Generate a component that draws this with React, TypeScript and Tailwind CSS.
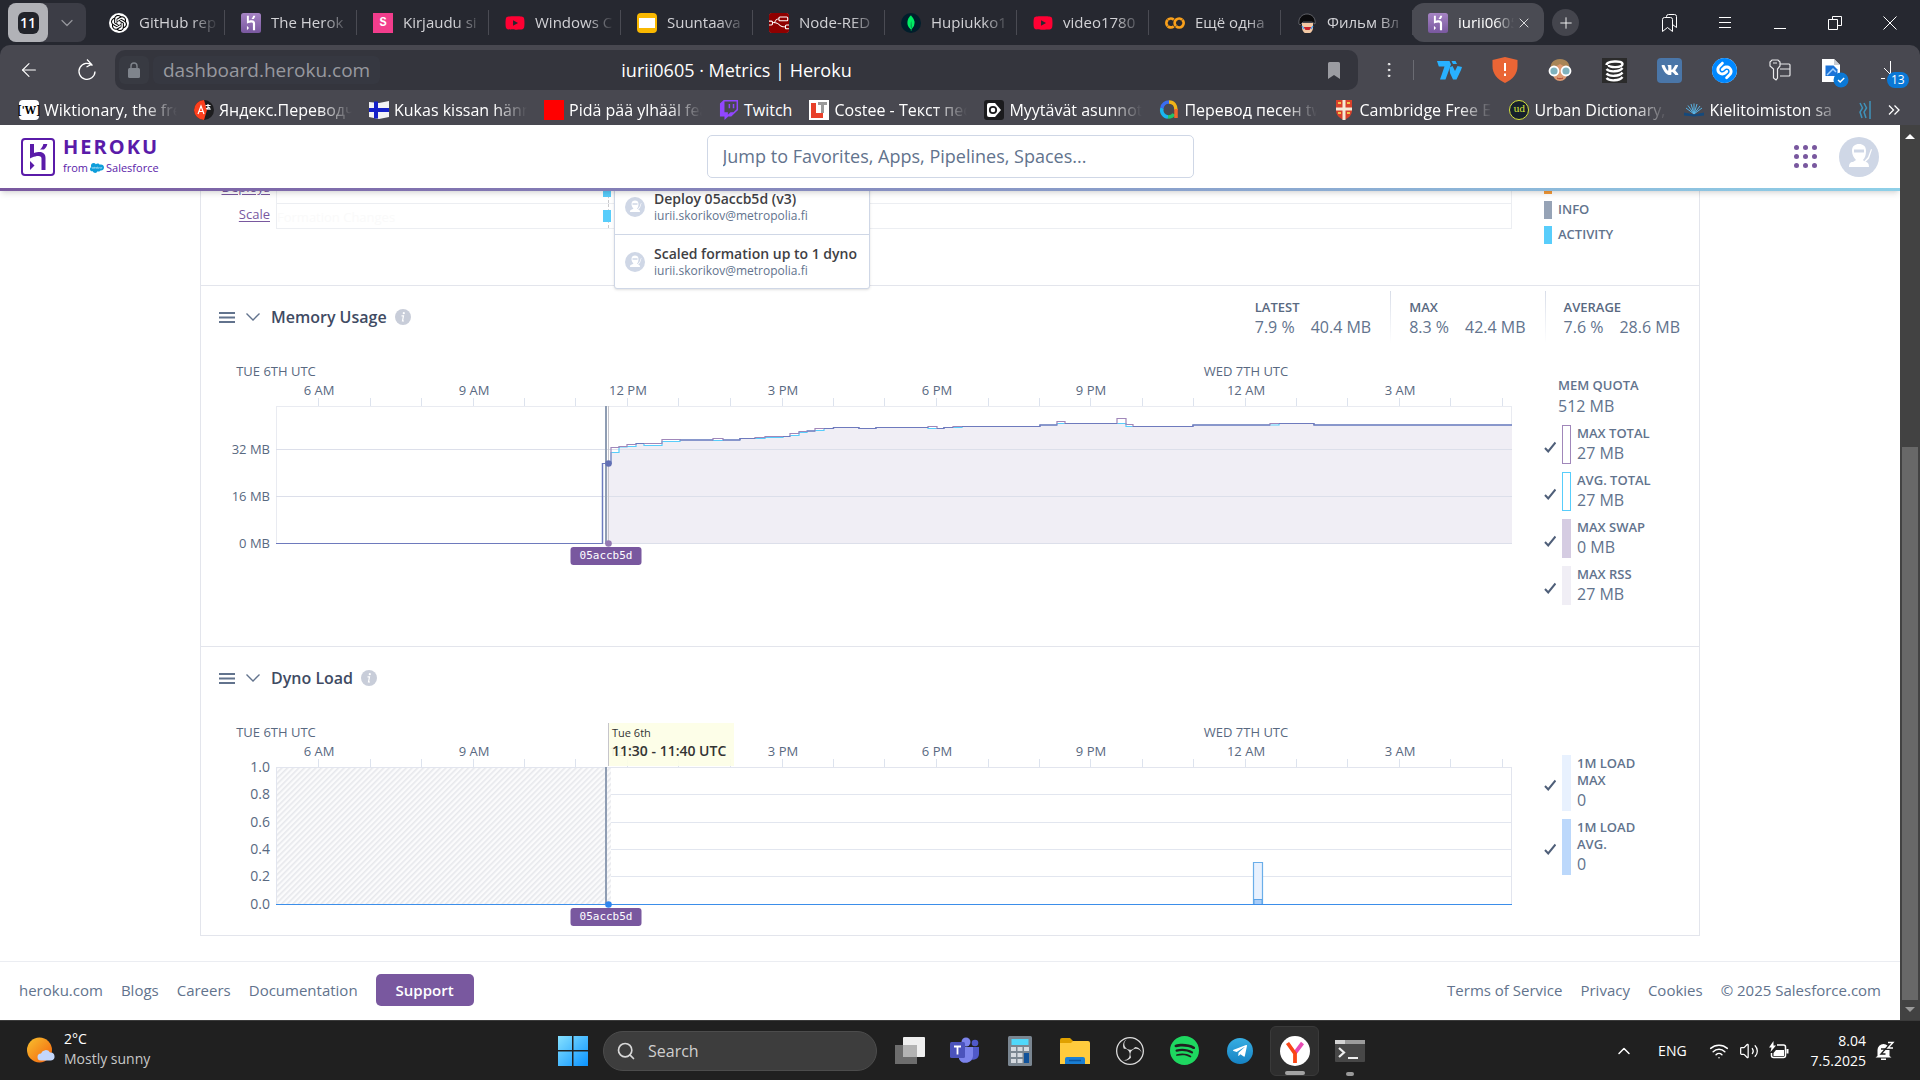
import React from "react";
import type { ReactNode } from "react";
import { FaYoutube, FaVk, FaSalesforce, FaTelegramPlane, FaTwitch } from "react-icons/fa";
import { SiOpenai, SiNodered, SiMongodb, SiGooglecolab, SiShazam, SiSpotify, SiObsstudio } from "react-icons/si";
import { X, Plus, ArrowLeft, ChevronDown, ChevronUp, Search, MoreVertical, Volume2, Wifi } from "lucide-react";

const FADE = "[mask-image:linear-gradient(to_right,#000_65%,transparent)]";

/* ---------- small drawings ---------- */

function HerokuGlyph({ color }: { color: string }) {
  return (
    <g fill={color}>
      <path d="M7.1 20.6v-5.4l2.5 2.7z" />
      <path d="M14.3 20.6v-7.9c0-.6-.4-1.4-1.8-1.4-2.8 0-5.4 1.4-5.4 1.4V3.4h2.3v5.9c1.2-.4 2.4-.6 3.5-.6 2.9 0 4 2 4 4v7.9z" />
      <path d="M15.4 7.2c1.100-1.300 1.600-2.600 1.700-3.800h-2.500c-.2 1.300-.8 2.500-2 3.800z" />
    </g>
  );
}

function HerokuFavicon() {
  return (
    <svg viewBox="0 0 24 24" className="size-5 shrink-0" aria-hidden="true">
      <defs>
        <linearGradient id="hk" x1="0" y1="0" x2="0" y2="1">
          <stop offset="0" stopColor="#a684c4" />
          <stop offset="1" stopColor="#79589f" />
        </linearGradient>
      </defs>
      <rect width="24" height="24" rx="3" fill="url(#hk)" />
      <HerokuGlyph color="#fff" />
    </svg>
  );
}

function Ninja({ className }: { className: string }) {
  return (
    <svg viewBox="0 0 40 40" className={className} aria-hidden="true">
      <circle cx="20" cy="20" r="20" fill="#cfd7e6" />
      <path
        d="M13 14c0-5 3-7 7-7s7 2 7 7c0 4-1 7-3 9l2 2c3 0 4 2 4 5H10c0-3 1-5 4-5l3-2c-2-2-4-5-4-9zM29 20l3-8 1 .5-3 9-4 4-1-1z"
        fill="#fff"
      />
      <path d="M15 12.5h10v3H15z" fill="#cfd7e6" />
    </svg>
  );
}

function CheckMark() {
  return (
    <svg viewBox="0 0 12 12" className="size-3 shrink-0" aria-hidden="true">
      <path d="M1 7l3.200 3.500L11.500 1.500" fill="none" stroke="#4f5f79" strokeWidth="2" />
    </svg>
  );
}

function InfoDot() {
  return (
    <svg viewBox="0 0 16 16" className="size-4" aria-hidden="true">
      <circle cx="8" cy="8" r="8" fill="#c8cdd9" />
      <circle cx="8.800" cy="4.200" r="1.100" fill="#fff" />
      <path d="M6.500 6.800h2L7.500 12h1.500" fill="none" stroke="#fff" strokeWidth="1.200" />
    </svg>
  );
}

const YouTube = () => <FaYoutube className="size-5 shrink-0 text-[#ff0033]" />;

/* ---------- browser chrome ---------- */

const tabs: { title: string; icon: ReactNode }[] = [
  {
    title: "GitHub rep",
    icon: (
      <span className="flex size-5 shrink-0 items-center justify-center rounded-full bg-white">
        <SiOpenai className="size-4 text-black" />
      </span>
    ),
  },
  { title: "The Herok", icon: <HerokuFavicon /> },
  {
    title: "Kirjaudu si",
    icon: (
      <span className="flex size-5 shrink-0 items-center justify-center bg-[#f23d8c] font-mono text-xs font-bold text-white">
        S
      </span>
    ),
  },
  { title: "Windows C", icon: <YouTube /> },
  {
    title: "Suuntaava",
    icon: (
      <span className="flex size-5 shrink-0 items-center justify-center rounded-sm bg-[#f9b800]">
        <span className="h-2.5 w-4 bg-white" />
      </span>
    ),
  },
  {
    title: "Node-RED",
    icon: (
      <span className="flex size-5 shrink-0 items-center justify-center rounded-sm bg-white">
        <SiNodered className="size-5 text-[#8f0000]" />
      </span>
    ),
  },
  {
    title: "Hupiukko1",
    icon: (
      <span className="flex size-5 shrink-0 items-center justify-center rounded-full bg-[#001e2b]">
        <SiMongodb className="size-4 text-[#00ed64]" />
      </span>
    ),
  },
  { title: "video1780", icon: <YouTube /> },
  { title: "Ещё одна", icon: <SiGooglecolab className="size-5 shrink-0 text-[#f9a01b]" /> },
  {
    title: "Фильм Вл",
    icon: (
      <svg viewBox="0 0 20 20" className="size-5 shrink-0" aria-hidden="true">
        <path d="M5 10h11v5a5 5 0 0 1-11 0z" fill="#f3c9a5" />
        <path d="M2 11C1 5 5 1 10 1s9 4 8 10l-3-2H6l-3 3z" fill="#0b0b0d" stroke="#8b8d94" strokeWidth=".6" />
        <path d="M6.500 14h8l-2 3h-4z" fill="#c8232c" />
        <path d="M5 13l2 3M16 13l-2 3" stroke="#3aa0ff" strokeWidth="1.200" />
      </svg>
    ),
  },
];

function ChromeCell({ label, children }: { label: string; children: ReactNode }) {
  return (
    <button aria-label={label} className="relative flex h-8 w-[55px] items-center justify-center">
      {children}
    </button>
  );
}

function TabBar() {
  return (
    <div className="flex h-[45px] items-center pr-[3px] text-[15px]">
      <div className="ml-2 flex h-[39px] w-[78px] shrink-0 items-center rounded-lg bg-[#3c3d46]">
        <button className="flex h-full w-10 items-center justify-center rounded-lg bg-[#b1b2b7]">
          <span className="flex h-[22px] w-[21px] items-center justify-center rounded-md bg-[#22242b] text-[14px] font-semibold text-white">
            11
          </span>
        </button>
        <button aria-label="Tab groups" className="flex h-full w-[38px] items-center justify-center">
          <ChevronDown className="size-5 text-[#94959b]" strokeWidth={1.5} />
        </button>
      </div>
      <nav className="ml-[7px] flex h-full min-w-0 items-center">
        {tabs.map((t) => (
          <a key={t.title} href="#" className="flex h-[25px] w-[132px] items-center gap-2.5 border-r border-[#4a4b53] pl-4">
            {t.icon}
            <span className={`w-[80px] overflow-hidden whitespace-nowrap text-[#d2d2d6] ${FADE}`}>{t.title}</span>
          </a>
        ))}
        <span className="-ml-px flex h-[39px] w-[132px] items-center gap-2.5 rounded-xl bg-[#4a4b53] pl-4">
          <HerokuFavicon />
          <span className={`w-[56px] overflow-hidden whitespace-nowrap text-white ${FADE}`}>iurii0605</span>
          <button aria-label="Close tab" className="-ml-2">
            <X className="size-4 text-white" strokeWidth={1.2} />
          </button>
        </span>
        <button aria-label="New tab" className="ml-2 flex size-[27px] items-center justify-center rounded-full bg-[#44454d]">
          <Plus className="size-[18px] text-white" strokeWidth={1.2} />
        </button>
      </nav>
      <div className="ml-auto flex text-white">
        <ChromeCell label="Bookmarks">
          <svg viewBox="0 0 18 20" className="h-5 w-[18px]" fill="none" stroke="#fff" aria-hidden="true">
            <path d="M1.500 6.500a2 2 0 0 1 2-2h6a2 2 0 0 1 2 2v12l-5-4-5 4zM5.500 4.500v-1a2 2 0 0 1 2-2h6a2 2 0 0 1 2 2v11l-4-3" />
          </svg>
        </ChromeCell>
        <ChromeCell label="Menu">
          <svg viewBox="0 0 12 12" className="size-3" stroke="#fff" aria-hidden="true">
            <path d="M0 .5h12M0 5.500h12M0 10.500h12" />
          </svg>
        </ChromeCell>
        <ChromeCell label="Minimize">
          <span className="mt-3 h-px w-3 bg-white" />
        </ChromeCell>
        <ChromeCell label="Restore">
          <svg viewBox="0 0 14 14" className="size-3.5" fill="none" stroke="#fff" aria-hidden="true">
            <path d="M.5 3.500h9v10h-9zM4.500 3.500v-3h9v9h-4" />
          </svg>
        </ChromeCell>
        <ChromeCell label="Close">
          <svg viewBox="0 0 14 14" className="size-3.5" stroke="#fff" aria-hidden="true">
            <path d="M.5.5l13 13M13.500.5l-13 13" />
          </svg>
        </ChromeCell>
      </div>
    </div>
  );
}

function Extensions() {
  return (
    <div className="flex shrink-0">
      <ChromeCell label="7TV">
        <svg viewBox="0 0 25 19" className="h-[19px] w-[25px]" fill="#28b1ff" aria-hidden="true">
          <path d="M0 0h12.500l1.500 3.500L8.500 18.500H3L7.500 5.500H1.800z" />
          <path d="M14.500 0h4l1.500 3h-4zM12.500 6.500l3-1.500 2.500 5 2.500-5 4.500 1-1 3-4.500 9.500h-3.500L13 12z" />
        </svg>
      </ChromeCell>
      <ChromeCell label="Protect">
        <svg viewBox="0 0 26 26" className="size-[26px]" aria-hidden="true">
          <path d="M13 0l12.500 3v6c0 8-5 13.500-12.500 17C5.500 22.500.5 17 .5 9V3z" fill="#ea6535" />
          <path d="M13 6v8M13 16.500V19" stroke="#fff" strokeWidth="2" />
        </svg>
      </ChromeCell>
      <ChromeCell label="Reader">
        <svg viewBox="0 0 24 24" className="size-6" aria-hidden="true">
          <path d="M3 14C1 6 5 1 12 1s11 5 9 13z" fill="#a98556" />
          <path d="M5 10l7-4 7 4v6c0 4-3 7-7 7s-7-3-7-7z" fill="#dc9a72" />
          <circle cx="6" cy="13" r="4.500" fill="#7fb2bd" stroke="#fff" strokeWidth="1.800" />
          <circle cx="18" cy="13" r="4.500" fill="#7fb2bd" stroke="#fff" strokeWidth="1.800" />
          <path d="M9 20c2 1 4 1 6 0" stroke="#b0402f" fill="none" />
        </svg>
      </ChromeCell>
      <ChromeCell label="Database">
        <svg viewBox="0 0 25 25" className="size-[25px]" aria-hidden="true">
          <rect width="25" height="25" fill="#2b2b2b" />
          <path
            d="M4.500 7c0-4 16-5 16-1s-14 4-14 1M4.500 11c3 3.500 13 3 16-1M4.500 15.500c3 3.500 13 3 16-1M4.500 20c3 3.500 13 3 16-1"
            fill="none"
            stroke="#fff"
            strokeWidth="2.400"
          />
        </svg>
      </ChromeCell>
      <ChromeCell label="VK">
        <span className="flex size-[25px] items-center justify-center rounded bg-[#4a76a8]">
          <FaVk className="size-[18px] text-white" />
        </span>
      </ChromeCell>
      <ChromeCell label="Shazam">
        <span className="flex size-[25px] items-center justify-center rounded-full bg-white">
          <SiShazam className="size-[25px] text-[#0088ff]" />
        </span>
      </ChromeCell>
      <ChromeCell label="Passwords">
        <svg viewBox="0 0 22 22" className="size-[22px]" fill="none" stroke="#e8e8ea" strokeWidth="1.200" aria-hidden="true">
          <path d="M3 1h6l2 2v4L8.500 10v9L7 21l-2.500-2V10L1 7V3zM4 4h4M11 5h9a1 1 0 0 1 1 1v10a1 1 0 0 1-1 1h-9M11 10h10" />
        </svg>
      </ChromeCell>
      <ChromeCell label="Screenshots">
        <svg viewBox="0 0 28 30" className="h-[30px] w-7 translate-y-[3px]" aria-hidden="true">
          <path d="M1 1h12l6 6v17H1z" fill="#fff" />
          <path d="M13 1v6h6z" fill="#c9ccd2" />
          <path d="M4.500 7.500h8l4 4V18h-12z" fill="#1b73d8" />
          <path d="M6 17l6-6 3 3" stroke="#9fd0ff" strokeWidth="1.500" fill="none" />
          <circle cx="20" cy="22" r="7.500" fill="#0a78d6" />
          <path d="M17 22l2.200 2 4-4" stroke="#fff" strokeWidth="1.500" fill="none" />
        </svg>
      </ChromeCell>
      <ChromeCell label="Downloads">
        <svg viewBox="0 0 20 22" className="h-[22px] w-5" stroke="#fff" fill="none" aria-hidden="true">
          <path d="M10.500 2v13M4 9l6.500 6.500M1 19.500h4" />
        </svg>
        <span className="absolute top-[18px] left-[25px] flex h-4 items-center rounded-full bg-[#0a78d6] px-1 text-[12px] text-white">
          13
        </span>
      </ChromeCell>
    </div>
  );
}

function Toolbar() {
  return (
    <div className="flex h-[50px] items-center pr-[3px]">
      <button aria-label="Back" className="flex w-[58px] justify-center">
        <ArrowLeft className="size-[22px] text-white" strokeWidth={1.2} />
      </button>
      <button aria-label="Reload" className="flex w-[57px] justify-center">
        <svg viewBox="0 0 20 22" className="h-[22px] w-5" fill="none" stroke="#fff" strokeWidth="1.300" aria-hidden="true">
          <path d="M15.500 6.500A8 8 0 1 0 18 12.500M10 .5l4.500 4.800-5 2.700" />
        </svg>
      </button>
      <div className="grid h-10 flex-1 grid-cols-[1fr_auto_1fr] items-center rounded-[10px] bg-[#34353d] px-1">
        <div className="flex items-center gap-1">
          <button aria-label="Site information" className="flex h-7 w-[30px] items-center justify-center rounded-md bg-[#383a42]">
            <svg viewBox="0 0 12 16" className="h-4 w-3" aria-hidden="true">
              <rect y="6" width="12" height="10" rx="1.500" fill="#7f848c" />
              <path d="M3 7V4a3 3 0 0 1 6 0v3" fill="none" stroke="#7f848c" strokeWidth="1.400" />
            </svg>
          </button>
          <span className="rounded-md bg-[#363841] px-2.5 text-[19px] leading-7 text-[#98999f]">dashboard.heroku.com</span>
        </div>
        <span className="text-[18px] text-white">iurii0605 · Metrics | Heroku</span>
        <button aria-label="Bookmark this page" className="mr-3.5 justify-self-end">
          <svg viewBox="0 0 12 17" className="h-[17px] w-3" aria-hidden="true">
            <path d="M0 1.500A1.500 1.500 0 0 1 1.500 0h9A1.500 1.500 0 0 1 12 1.500V17l-6-4-6 4z" fill="#9b9ca2" />
          </svg>
        </button>
      </div>
      <div className="mr-2 flex h-5 w-14 items-center justify-center border-r border-[#6b6c73] pl-1.5">
        <MoreVertical className="size-5 text-white" strokeWidth={1.2} />
      </div>
      <Extensions />
    </div>
  );
}

const bookmarks: { title: string; icon: ReactNode; short?: boolean }[] = [
  {
    title: "Wiktionary, the fre",
    icon: (
      <span className="flex size-5 shrink-0 items-center justify-center rounded-sm bg-white font-serif text-[12px] font-bold text-black">
        ['W]
      </span>
    ),
  },
  {
    title: "Яндекс.Переводчи",
    icon: (
      <svg viewBox="0 0 20 20" className="size-5 shrink-0" aria-hidden="true">
        <circle cx="10" cy="10" r="10" fill="#1d1d1f" />
        <path d="M10 0a10 10 0 0 0 0 20l3-10z" fill="#fc3f1d" />
        <path d="M4 14l3-8 3 8M5 11.500h4M11.500 5.500h5M14 4v6M12 9c2-1 4-3 4 1" stroke="#fff" strokeWidth="1.200" fill="none" />
      </svg>
    ),
  },
  {
    title: "Kukas kissan hänn",
    icon: (
      <svg viewBox="0 0 20 20" className="size-5 shrink-0" aria-hidden="true">
        <path d="M0 2l10 1 10-2v16l-10 2-10-2z" fill="#f1f1f4" />
        <path d="M5 1.500h4v17H5zM0 8h20v4H0z" fill="#1420c8" />
      </svg>
    ),
  },
  { title: "Pidä pää ylhääl fea", icon: <span className="size-5 shrink-0 bg-[#ff0000]" /> },
  {
    title: "Twitch",
    icon: (
      <span className="flex size-5 shrink-0 items-center justify-center">
        <FaTwitch className="size-5 text-[#9146ff]" />
      </span>
    ),
    short: true,
  },
  {
    title: "Costee - Текст пес",
    icon: (
      <svg viewBox="0 0 20 20" className="size-5 shrink-0" aria-hidden="true">
        <rect width="20" height="20" fill="#fff" />
        <path d="M2 3h5v10h7v5H2z" fill="#e8402a" />
        <path d="M9 2h9v3h-3v8h-3V5H9z" fill="#9a9a9a" />
      </svg>
    ),
  },
  {
    title: "Myytävät asunnot",
    icon: (
      <svg viewBox="0 0 20 20" className="size-5 shrink-0" aria-hidden="true">
        <rect width="20" height="20" rx="3" fill="#1b1b1d" />
        <path d="M5 3h6l6 7-6 7H5a2 2 0 0 1-2-2V5a2 2 0 0 1 2-2z" fill="#fff" />
        <circle cx="9" cy="10" r="3.200" fill="none" stroke="#1b1b1d" strokeWidth="1.800" />
      </svg>
    ),
  },
  {
    title: "Перевод песен tw",
    icon: (
      <svg viewBox="0 0 20 20" className="size-5 shrink-0" fill="none" strokeWidth="3.500" aria-hidden="true">
        <path d="M9 17a7 7 0 0 1-6-9" stroke="#19b6f0" />
        <path d="M3 8a7 7 0 0 1 7-6" stroke="#3a6df0" />
        <path d="M9 17c3 0 5-1 6-3" stroke="#21c46b" />
        <path d="M10 2c5 0 7 4 7 8" stroke="#f0b318" />
        <path d="M17 9v9" stroke="#f2672a" />
      </svg>
    ),
  },
  {
    title: "Cambridge Free En",
    icon: (
      <svg viewBox="0 0 20 20" className="size-5 shrink-0" aria-hidden="true">
        <path d="M2 0h16v10c0 5-3 8-8 10-5-2-8-5-8-10z" fill="#d9412b" />
        <path d="M8.500 0h3v20h-3zM2 7.500h16v3H2z" fill="#f4ead6" />
        <path d="M4 3h3M13 3h3M4 13h3M13 13h3" stroke="#f3c64b" strokeWidth="2" />
      </svg>
    ),
  },
  {
    title: "Urban Dictionary, A",
    icon: (
      <span className="flex size-5 shrink-0 items-center justify-center rounded-full border border-[#d5e33b] bg-[#16202c] pb-0.5 font-serif text-[11px] text-[#d5e33b]">
        ud
      </span>
    ),
  },
  {
    title: "Kielitoimiston sa",
    icon: (
      <svg viewBox="0 0 20 20" className="size-5 shrink-0" stroke="#58b4e6" aria-hidden="true">
        <path d="M10 14L2 8M10 14L4 5.500M10 14L7 4M10 14V3.500M10 14l3-10M10 14l6-8M10 14l8-6" />
        <path d="M0 13l10 2 10-2v2l-10 1-10-1z" fill="#154a7d" stroke="#154a7d" />
      </svg>
    ),
  },
];

function BookmarksBar() {
  return (
    <div className="flex h-[30px] items-center gap-[17px] pr-[23px] pl-[19px] text-[16px] text-white">
      {bookmarks.map((b) => (
        <a key={b.title} href="#" className="flex items-center gap-[5px] leading-7">
          {b.icon}
          <span
            className={
              b.short
                ? "whitespace-nowrap"
                : "w-[133px] overflow-hidden whitespace-nowrap [mask-image:linear-gradient(to_right,#000_75%,transparent)]"
            }
          >
            {b.title}
          </span>
        </a>
      ))}
      <svg viewBox="0 0 12 18" className="h-[18px] w-3 shrink-0" fill="none" stroke="#3f93bb" strokeWidth="1.500" aria-hidden="true">
        <path d="M1 2l2.500 5L1 11l2 6M5 2l2.500 5L5 11l2 6M11 0v18" />
      </svg>
      <button aria-label="More bookmarks" className="ml-auto">
        <svg viewBox="0 0 12 10" className="h-2.5 w-3" fill="none" stroke="#fff" strokeWidth="1.300" aria-hidden="true">
          <path d="M1 .5L5.500 5 1 9.500M6.500.5L11 5 6.500 9.500" />
        </svg>
      </button>
    </div>
  );
}

/* ---------- Heroku page ---------- */

function Header() {
  return (
    <header className="relative z-20 shrink-0 bg-white shadow-md">
      <div className="grid h-[63px] grid-cols-[1fr_minmax(0,487px)_1fr] items-center">
        <a href="#" className="ml-[21px] flex items-center gap-2 text-[#5a1ba9]">
          <svg viewBox="0 0 34 38" className="h-[38px] w-[34px]" aria-hidden="true">
            <rect x="1" y="1" width="32" height="36" rx="3" fill="none" stroke="#5a1ba9" strokeWidth="2" />
            <g fill="#5a1ba9">
              <path d="M9 32v-9l4.500 4.500z" />
              <path d="M20.500 32V20.500c0-1.500-1-2.500-3-2.500-4.500 0-8.500 2.500-8.500 2.500V6h4v9c2-.8 4-1 5.500-1 4 0 6 2.500 6 6v12z" />
              <path d="M19 11.500c2-1.700 3-3.600 3.300-5.500h4c-.3 2-1.500 4-3.300 5.500z" />
            </g>
          </svg>
          <span className="flex flex-col">
            <span className="text-[20px] leading-[22px] font-bold tracking-widest">HEROKU</span>
            <span className="flex items-center gap-0.5 text-[11px] leading-5">
              from <FaSalesforce className="size-3.5 text-[#0d9dda]" /> Salesforce
            </span>
          </span>
        </a>
        <input
          aria-label="Jump to"
          placeholder="Jump to Favorites, Apps, Pipelines, Spaces..."
          className="h-[43px] w-full rounded-[5px] border border-[#cfd7e6] bg-white px-[15px] pb-0.5 text-[18px] placeholder:text-[#62738d]"
        />
        <div className="mr-[21px] flex items-center gap-[22px] justify-self-end">
          <button aria-label="Apps" className="grid grid-cols-3 gap-1">
            {Array.from({ length: 9 }, (_, i) => (
              <span key={i} className="size-[5px] rounded-full bg-[#79589f]" />
            ))}
          </button>
          <button aria-label="Account">
            <Ninja className="size-10" />
          </button>
        </div>
      </div>
      <div className="h-[3px] bg-linear-to-r from-[#79589f] to-[#8ed0e8]" />
    </header>
  );
}

const W = 1236;
const H = 138;
const pct = (x: number) => `${(x / W) * 100}%`;
const ticks = [43, 95, 146, 198, 249, 300, 352, 403, 455, 507, 558, 609, 661, 713, 764, 815, 867, 918, 970, 1021, 1072, 1124, 1175, 1227];
const hours = ["6 AM", "9 AM", "12 PM", "3 PM", "6 PM", "9 PM", "12 AM", "3 AM"];

function Axis() {
  return (
    <div className="relative h-[58px] text-[13px] leading-4 text-[#596981]">
      <span className="absolute top-[15px] left-0 -translate-x-1/2 whitespace-nowrap">TUE 6TH UTC</span>
      <span className="absolute top-[15px] -translate-x-1/2 whitespace-nowrap" style={{ left: pct(970) }}>
        WED 7TH UTC
      </span>
      {hours.map((h, i) => (
        <span key={h} className="absolute top-[34px] -translate-x-1/2 whitespace-nowrap" style={{ left: pct(ticks[i * 3]) }}>
          {h}
        </span>
      ))}
      <svg viewBox={`0 0 ${W} 8`} preserveAspectRatio="none" className="absolute bottom-0 h-2 w-full" aria-hidden="true">
        {ticks.map((t) => (
          <path key={t} d={`M${t - 0.5} 0v8`} stroke="#dde3ee" />
        ))}
      </svg>
    </div>
  );
}

function YLabels({ items, size }: { items: [string, number][]; size: string }) {
  return (
    <>
      {items.map(([t, y]) => (
        <span
          key={t}
          className={`absolute right-full mr-1.5 -translate-y-1/2 leading-4 whitespace-nowrap text-[#596981] ${size}`}
          style={{ top: y }}
        >
          {t}
        </span>
      ))}
    </>
  );
}

function ReleaseTag() {
  return (
    <span
      className="absolute top-full mt-[3px] flex h-[18px] -translate-x-1/2 items-center rounded-[3px] bg-[#79589f] px-[9px] font-['DejaVu_Sans_Mono',monospace] text-[11px] text-white"
      style={{ left: pct(330) }}
    >
      05accb5d
    </span>
  );
}

/* x, max total, avg. total */
const steps: [number, number, number][] = [
  [0, 137.5, 137.5], [326.5, 57.5, 57.5], [335, 41.5, 46.5], [343, 40.5, 41], [351, 38.5, 40.5], [360, 37.5, 37.5],
  [368, 37.5, 39.5], [386, 33.5, 35.5], [404, 34, 34], [437, 32.5, 34.5], [447, 34, 34], [464, 32.5, 32.5],
  [479, 31.5, 32.5], [489, 30.5, 31.5], [507, 30.5, 30.5], [514, 27.5, 29.5], [523, 25.5, 26.5], [531, 25, 25],
  [539, 22.5, 24.5], [548, 22.5, 22.5], [557.5, 21.5, 21.5], [583, 22.5, 22.5], [600, 21.5, 21.5], [652, 20.5, 22.5],
  [661, 22.5, 22.5], [668, 21.5, 21.5], [677, 20.5, 21.5], [686, 20.5, 20.5], [764, 19, 19], [781, 15.5, 17.5],
  [789, 17.5, 17.5], [841, 12.5, 17.5], [850, 18.5, 20.5], [857, 20.5, 20.5], [917, 19, 19], [994, 17.5, 19],
  [1003, 17.5, 17.5], [1038, 19, 19],
];

function stepPath(k: 1 | 2) {
  return steps.map((s, i) => `${i ? `H${s[0]}V${s[k]}` : `M0 ${s[k]}`}`).join("") + `H${W}`;
}

const fillPath =
  `M335 ${H}` +
  steps
    .slice(2)
    .map((s) => `H${s[0]}V${s[2]}`)
    .join("") +
  `H${W}V${H}Z`;

/* stretches where both totals run together */
const sharedPath = steps
  .map((s, i) => {
    if (s[1] !== s[2]) return "";
    const prev = steps[i - 1];
    const end = i + 1 < steps.length ? steps[i + 1][0] : W;
    return `M${s[0]} ${prev && prev[1] === prev[2] ? prev[1] : s[1]}V${s[1]}H${end}`;
  })
  .join("");

function MemoryPlot() {
  return (
    <div className="relative h-[138px]">
      <YLabels size="text-[13px]" items={[["32 MB", 43], ["16 MB", 90], ["0 MB", 137]]} />
      <svg
        viewBox={`0 0 ${W} ${H}`}
        preserveAspectRatio="none"
        className="block h-full w-full overflow-visible"
        role="img"
        aria-label="Memory usage"
      >
        <rect x=".5" y=".5" width="1235" height="137" fill="none" stroke="#e9ebf1" />
        <path d={fillPath} fill="#f0eef5" />
        <path d="M331 58h4v80h-4z" fill="#f0eef5" />
        <path d="M0 43.500h1236M0 90.500h1236M0 137.500h1236" stroke="#dcdfea" />
        <path d={stepPath(2)} fill="none" stroke="#58cdfb" strokeWidth="1.200" />
        <path d={stepPath(1)} fill="none" stroke="#a087ba" strokeWidth="1.200" />
        <path d={sharedPath} fill="none" stroke="#6e7abd" strokeWidth="1.200" />
        <path d="M330 0v138" stroke="#8f9db3" strokeWidth="2" />
        <path d="M332.500 0v138" stroke="#c6c5cb" />
        <circle cx="332.500" cy="57.500" r="3.300" fill="#6270b5" />
        <circle cx="332.500" cy="137.500" r="3.300" fill="#957ab3" />
      </svg>
      <ReleaseTag />
    </div>
  );
}

function LoadPlot() {
  return (
    <div className="relative h-[138px]">
      <YLabels size="text-[14px]" items={[["1.0", 0], ["0.8", 27], ["0.6", 55], ["0.4", 82], ["0.2", 109], ["0.0", 137]]} />
      <div
        className="absolute -top-[44px] flex h-[43px] w-[126px] flex-col justify-end border-l border-[#c6c5cb] bg-[#fdfee6]/90 pb-[6px] pl-[3px] whitespace-nowrap text-[#333]"
        style={{ left: pct(332) }}
      >
        <span className="text-[11px] leading-[18px]">Tue 6th</span>
        <span className="text-[14px] leading-[18px] font-semibold">11:30 - 11:40 UTC</span>
      </div>
      <svg
        viewBox={`0 0 ${W} ${H}`}
        preserveAspectRatio="none"
        className="block h-full w-full overflow-visible"
        role="img"
        aria-label="Dyno load"
      >
        <defs>
          <pattern id="hatch" width="4" height="4" patternUnits="userSpaceOnUse" patternTransform="rotate(45)">
            <rect width="4" height="4" fill="#fbfbfc" />
            <rect width="1.600" height="4" fill="#e7e8ec" />
          </pattern>
        </defs>
        <path d="M0 27.500h1236M0 55.500h1236M0 82.500h1236M0 109.500h1236" stroke="#e2e6ef" />
        <rect width="335" height="138" fill="url(#hatch)" />
        <rect x=".5" y=".5" width="1235" height="137" fill="none" stroke="#e2e5ee" />
        <path d="M0 137.500H977.500V95.500H986.500V137.500H1236" fill="#e8f1fe" stroke="#6aaee9" strokeWidth="1.200" />
        <rect x="978" y="132.500" width="8" height="5" fill="#a9cdf8" stroke="#5ba3e8" />
        <path d="M0 137.500H1236" stroke="#3b8eea" />
        <path d="M330 0v138" stroke="#8f9db3" strokeWidth="2" />
        <circle cx="332.500" cy="137.500" r="3.300" fill="#2f86f0" />
      </svg>
      <ReleaseTag />
    </div>
  );
}

function LegendItem({ label, value, swatch }: { label: string; value: string; swatch: string }) {
  return (
    <label className="flex items-stretch">
      <input type="checkbox" defaultChecked className="sr-only" />
      <span className="flex w-[18px] items-center pt-1">
        <CheckMark />
      </span>
      <span className={`w-[9px] ${swatch}`} />
      <span className="ml-1.5 flex w-20 flex-col text-[#62738d]">
        <span className="text-[13px] leading-[17px] font-semibold">{label}</span>
        <span className="text-[16px] leading-[22px]">{value}</span>
      </span>
    </label>
  );
}

function Stat({ label, percent, size, divided }: { label: string; percent: string; size: string; divided?: boolean }) {
  return (
    <div className="relative px-[19px] text-[#62738d]">
      {divided && <span className="absolute -top-[6px] left-0 h-[52px] w-px bg-linear-to-b from-[#d8dde8] to-white" />}
      <div className="text-[13px] leading-5 font-semibold text-[#596981]">{label}</div>
      <div className="flex gap-4 text-[16px] leading-5">
        <span>{percent}</span>
        <span>{size}</span>
      </div>
    </div>
  );
}

function Metric({ title, stats, children, legend }: { title: string; stats?: ReactNode; children: ReactNode; legend: ReactNode }) {
  return (
    <section className="border-t border-[#e3e5ec]">
      <div className="flex h-[62px] items-center pl-[18px]">
        <button aria-label="Reorder">
          <svg viewBox="0 0 16 11" className="h-[11px] w-4" stroke="#62738d" strokeWidth="1.800" aria-hidden="true">
            <path d="M0 1h16M0 5.500h16M0 10h16" />
          </svg>
        </button>
        <button aria-label={`Collapse ${title}`} className="ml-[11px]">
          <svg viewBox="0 0 14 8" className="h-2 w-3.5" fill="none" stroke="#62738d" strokeWidth="1.400" aria-hidden="true">
            <path d="M.5.5L7 7 13.500.5" />
          </svg>
        </button>
        <h2 className="ml-[11px] text-[16px] font-semibold text-[#3f4b63]">{title}</h2>
        <button aria-label="Info" className="ml-2">
          <InfoDot />
        </button>
        {stats && <div className="ml-auto flex">{stats}</div>}
      </div>
      <div className="grid grid-cols-[75px_minmax(0,1fr)_187px]">
        <div />
        <div>
          <Axis />
          {children}
        </div>
        <div className="pl-8">{legend}</div>
      </div>
    </section>
  );
}

function EventRow({ label, height, ghost, mark }: { label: string; height: string; ghost?: string; mark: string }) {
  return (
    <>
      <a
        href="#"
        className={`flex items-center justify-end pr-1.5 pb-1 text-[13px] text-[#79589f] underline underline-offset-2 ${height}`}
      >
        {label}
      </a>
      <div className={`relative border-x border-b border-[#eceef2] ${height}`}>
        <span className="text-[13px] leading-6 text-[#fafafa]">{ghost}</span>
        <span className="absolute inset-y-0 w-0 border-l border-dashed border-[#c9c9cc]" style={{ left: pct(332) }} />
        <span className={`absolute w-2 bg-[#58cdfb] ${mark}`} style={{ left: pct(327) }} />
      </div>
    </>
  );
}

function Events() {
  return (
    <section className="grid h-[109px] grid-cols-[75px_minmax(0,1fr)_187px]">
      <div className="relative col-span-2 grid grid-cols-[75px_minmax(0,1fr)] content-start">
        <EventRow label="Deploys" height="h-7" mark="bottom-1.5 h-3" />
        <EventRow label="Scale" height="h-[25px]" ghost="Formation Changes" mark="top-1.5 h-3" />
        <div className="absolute top-[3px] left-[413px] z-10 rounded-[3px] border border-[#cfd7e6] bg-white shadow">
          {["Deploy 05accb5d (v3)", "Scaled formation up to 1 dyno"].map((t, i) => (
            <div key={t} className={`flex h-[54px] items-center gap-[9px] px-2.5 ${i ? "border-t border-[#cfd7e6]" : ""}`}>
              <Ninja className="size-5" />
              <div className="pr-0.5">
                <div className="text-[14px] leading-[18px] font-semibold text-[#3f3f44]">{t}</div>
                <div className="text-[12px] leading-4 text-[#62738d]">iurii.skorikov@metropolia.fi</div>
              </div>
            </div>
          ))}
        </div>
      </div>
      <ul className="flex flex-col gap-[7px] pl-8 text-[13px] leading-4 font-semibold text-[#62738d]">
        <li className="h-[18px] w-2 bg-[#f59b3a]" />
        <li className="flex h-[18px] gap-1.5">
          <span className="w-2 bg-[#96a3b6]" />
          INFO
        </li>
        <li className="flex h-[18px] gap-1.5">
          <span className="w-2 bg-[#58cdfb]" />
          ACTIVITY
        </li>
      </ul>
    </section>
  );
}

function Footer() {
  return (
    <footer className="mt-auto flex h-[59px] shrink-0 items-center justify-between border-t border-[#ebedf2] px-[19px] pb-0.5 text-[15px] text-[#62738d]">
      <nav className="flex items-center gap-[18px]">
        <a href="#">heroku.com</a>
        <a href="#">Blogs</a>
        <a href="#">Careers</a>
        <a href="#">Documentation</a>
        <a href="#" className="rounded-[5px] bg-[#79589f] px-5 leading-8 font-semibold text-white">
          Support
        </a>
      </nav>
      <nav className="flex gap-[18px]">
        <a href="#">Terms of Service</a>
        <a href="#">Privacy</a>
        <a href="#">Cookies</a>
        <span>© 2025 Salesforce.com</span>
      </nav>
    </footer>
  );
}

function Page() {
  return (
    <div className="flex min-h-0 flex-1 bg-white">
      <div className="flex min-w-0 flex-1 flex-col overflow-hidden">
        <Header />
        <main className="flex min-h-0 flex-1 flex-col overflow-hidden">
          <div className="mx-auto -mt-[15px] w-full max-w-[1500px] border-x border-b border-[#e3e5ec] pb-[30px]">
            <Events />
            <Metric
              title="Memory Usage"
              stats={
                <>
                  <Stat label="LATEST" percent="7.9 %" size="40.4 MB" />
                  <Stat label="MAX" percent="8.3 %" size="42.4 MB" divided />
                  <Stat label="AVERAGE" percent="7.6 %" size="28.6 MB" divided />
                </>
              }
              legend={
                <div className="flex h-[298px] flex-col gap-2 pt-[27px]">
                  <div className="pl-3.5 text-[#62738d]">
                    <div className="text-[13px] leading-5 font-semibold">MEM QUOTA</div>
                    <div className="text-[16px] leading-[22px]">512 MB</div>
                  </div>
                  <LegendItem label="MAX TOTAL" value="27 MB" swatch="border border-[#a087ba]" />
                  <LegendItem label="AVG. TOTAL" value="27 MB" swatch="border border-[#58cdfb]" />
                  <LegendItem label="MAX SWAP" value="0 MB" swatch="bg-[#d5cce2]" />
                  <LegendItem label="MAX RSS" value="27 MB" swatch="bg-[#f0eef5]" />
                </div>
              }
            >
              <MemoryPlot />
            </Metric>
            <Metric
              title="Dyno Load"
              legend={
                <div className="flex flex-col gap-2 pt-[46px]">
                  <LegendItem label="1M LOAD MAX" value="0" swatch="bg-[#e8f1fe]" />
                  <LegendItem label="1M LOAD AVG." value="0" swatch="bg-[#bcd8fb]" />
                </div>
              }
            >
              <LoadPlot />
            </Metric>
          </div>
          <Footer />
        </main>
      </div>
      <div className="flex w-5 shrink-0 flex-col items-center bg-[#424242]">
        <svg viewBox="0 0 10 24" className="h-6 w-2.5" aria-hidden="true">
          <path d="M0 14l5-5 5 5z" fill="#fff" />
        </svg>
        <div className="mt-[298px] w-4 flex-1 bg-[#686868]" />
        <svg viewBox="0 0 10 20" className="h-5 w-2.5" aria-hidden="true">
          <path d="M0 7l5 5 5-5z" fill="#9a9a9a" />
        </svg>
      </div>
    </div>
  );
}

/* ---------- taskbar ---------- */

function TaskCell({ label, active, children }: { label: string; active?: boolean; children: ReactNode }) {
  return (
    <button
      aria-label={label}
      className={`relative mx-[3px] flex h-[50px] w-[49px] items-center justify-center rounded-md ${active ? "border border-[#3a3a3a] bg-[#2e2e2e]" : ""}`}
    >
      {children}
    </button>
  );
}

function Taskbar() {
  return (
    <div className="grid h-[60px] shrink-0 grid-cols-[1fr_auto_1fr] items-center border-t border-[#3b3b3b] bg-[#202020] text-[14px] text-white">
      <button className="ml-[27px] flex items-center gap-[9px] text-left">
        <svg viewBox="0 0 28 28" className="size-7" aria-hidden="true">
          <defs>
            <linearGradient id="sun" x1="0" y1="0" x2="1" y2="1">
              <stop offset="0" stopColor="#f7c12f" />
              <stop offset="1" stopColor="#f4600c" />
            </linearGradient>
          </defs>
          <circle cx="12.500" cy="13" r="12.500" fill="url(#sun)" />
          <path d="M14 23.500a3.500 3.500 0 0 1 0-7 5 5 0 0 1 9-1 4 4 0 0 1 1 8z" fill="#c3d6fb" />
        </svg>
        <span className="flex flex-col pb-1 leading-5">
          <span>2°C</span>
          <span className="text-[#c8c8c8]">Mostly sunny</span>
        </span>
      </button>
      <div className="flex items-center">
        <button aria-label="Start" className="flex w-[60px] justify-center">
          <svg viewBox="0 0 30 30" className="size-[30px]" aria-hidden="true">
            <defs>
              <linearGradient id="win" x1="0" y1="0" x2="1" y2="1">
                <stop offset="0" stopColor="#86e1ff" />
                <stop offset="1" stopColor="#0a93ff" />
              </linearGradient>
            </defs>
            <path d="M0 0h14v14H0zM15.500 0H30v14H15.500zM0 15.500h14V30H0zM15.500 15.500H30V30H15.500z" fill="url(#win)" />
          </svg>
        </button>
        <label className="mr-[5px] flex h-10 w-[274px] items-center gap-3 rounded-full border border-[#4c4c4c] bg-[#3d3d3d] pl-3">
          <Search className="size-5 shrink-0 text-[#d8d8d8]" strokeWidth={2} />
          <input aria-label="Search" placeholder="Search" className="w-full bg-transparent pr-4 text-[16px] placeholder:text-[#cfcfcf]" />
        </label>
        <TaskCell label="Task view">
          <svg viewBox="0 0 30 28" className="h-7 w-[30px]" aria-hidden="true">
            <rect x="0" y="8" width="22" height="19" fill="#6d6d6d" />
            <rect x="8" y="0" width="22" height="20" rx="1" fill="#efefef" />
            <rect x="8" y="8" width="14" height="12" fill="#b3b3b3" />
          </svg>
        </TaskCell>
        <TaskCell label="Teams">
          <svg viewBox="0 0 30 28" className="h-7 w-[30px]" aria-hidden="true">
            <circle cx="16" cy="5" r="4.500" fill="#7b83eb" />
            <circle cx="25" cy="6" r="3.300" fill="#5059c9" />
            <path d="M19 10h10v7a6 6 0 0 1-9 5z" fill="#5059c9" />
            <path d="M9 10h14v9a7.500 7.500 0 0 1-14 3z" fill="#7b83eb" />
            <rect x="0" y="5" width="15" height="16" rx="1.500" fill="#4b53bc" />
            <path d="M4 9.500h7M7.500 9.500v8" stroke="#fff" strokeWidth="1.800" />
          </svg>
        </TaskCell>
        <TaskCell label="Calculator">
          <svg viewBox="0 0 24 30" className="h-[30px] w-6" aria-hidden="true">
            <rect width="24" height="30" rx="1.500" fill="#7a8691" />
            <rect x="3.500" y="3" width="17" height="6" fill="#4fd8fb" />
            <path d="M3 11h5v4H3zM9.500 11h5v4h-5zM16 11h5v4h-5zM3 17h5v4H3zM9.500 17h5v4h-5zM3 23h5v4H3zM9.500 23h5v4h-5z" fill="#d5dae0" />
            <rect x="16" y="17" width="5" height="10" fill="#11539b" />
          </svg>
        </TaskCell>
        <TaskCell label="File Explorer">
          <svg viewBox="0 0 30 26" className="h-[26px] w-[30px]" aria-hidden="true">
            <path d="M0 2a2 2 0 0 1 2-2h8l3 3v5H0z" fill="#e0a100" />
            <path d="M0 5h11l2-2h15a2 2 0 0 1 2 2v21H0z" fill="#ffcb3d" />
            <path d="M5 26v-5a2 2 0 0 1 2-2h16a2 2 0 0 1 2 2v5z" fill="#1a7fd4" />
            <path d="M9 22.500h12" stroke="#0c56a0" strokeWidth="1.500" />
          </svg>
        </TaskCell>
        <TaskCell label="OBS Studio">
          <SiObsstudio className="size-7 text-[#dcdcdc]" />
        </TaskCell>
        <TaskCell label="Spotify">
          <SiSpotify className="size-[29px] text-[#1ed760]" />
        </TaskCell>
        <TaskCell label="Telegram">
          <span className="flex size-[26px] items-center justify-center rounded-full bg-linear-to-b from-[#37aee2] to-[#1583c4]">
            <FaTelegramPlane className="size-4 text-white" />
          </span>
        </TaskCell>
        <TaskCell label="Yandex Browser" active>
          <svg viewBox="0 0 30 30" className="size-[30px]" aria-hidden="true">
            <circle cx="15" cy="15" r="15" fill="#fff" />
            <path d="M22.500 7L15 17" stroke="#e84bb4" strokeWidth="3.800" />
            <path d="M7.500 7L15 17.500V27" stroke="#fa4616" strokeWidth="3.800" fill="none" />
          </svg>
          <span className="absolute bottom-0 h-1 w-5 rounded-full bg-[#a3a3a3]" />
        </TaskCell>
        <TaskCell label="Terminal">
          <svg viewBox="0 0 30 22" className="h-[22px] w-[30px]" aria-hidden="true">
            <rect width="30" height="22" rx="1" fill="#474747" />
            <path d="M0 0h30v4H0z" fill="#9b9b9b" />
            <path d="M0 0h10v4H0z" fill="#d2d2d2" />
            <path d="M4 8l5 4.500L4 17M13 18h10" stroke="#eee" strokeWidth="2.200" fill="none" />
          </svg>
          <span className="absolute bottom-0 h-1 w-2 rounded-full bg-[#9a9a9a]" />
        </TaskCell>
      </div>
      <div className="mr-[25px] flex items-center justify-self-end">
        <button aria-label="Show hidden icons" className="mr-6">
          <ChevronUp className="size-5" strokeWidth={1.8} />
        </button>
        <span className="mr-[22px]">ENG</span>
        <span className="mr-[22px] flex gap-2.5">
          <Wifi className="size-5" strokeWidth={1.8} />
          <Volume2 className="size-5" strokeWidth={1.5} />
          <svg viewBox="0 0 20 20" className="size-5" fill="none" stroke="#fff" strokeWidth="1.500" aria-hidden="true">
            <path d="M8 4h6.500a2 2 0 0 1 2 2v8.500a2 2 0 0 1-2 2H4.500a2 2 0 0 1-2-2V12" />
            <path d="M7 9h8v6H4.500v-3zM17.500 8h2v4.500h-2z" fill="#fff" stroke="none" />
            <path d="M4.500 0L0 6.500h2.500L1.500 11l5.500-6.500H4.500z" fill="#fff" stroke="none" />
          </svg>
        </span>
        <span className="mr-[9px] flex flex-col text-right leading-5">
          <span>8.04</span>
          <span>7.5.2025</span>
        </span>
        <svg viewBox="0 0 20 20" className="size-5" aria-hidden="true">
          <path d="M2.500 15V9a6 6 0 0 1 12 0v6l2 1.500H.5zM6 17.500h5v1.500H6z" fill="#fff" />
          <path d="M6 8h4.500L6 13h4.500" fill="none" stroke="#202020" strokeWidth="1.400" />
          <path d="M13 1.500h5l-5 5.500h5" fill="none" stroke="#202020" strokeWidth="4" />
          <path d="M13 1.500h5l-5 5.500h5" fill="none" stroke="#fff" strokeWidth="1.400" />
        </svg>
      </div>
    </div>
  );
}

export default function App() {
  return (
    <div className="flex h-screen flex-col overflow-hidden font-['Open_Sans',sans-serif]">
      <div className="shrink-0 bg-[#262830]">
        <TabBar />
        <div className="rounded-t-[10px] bg-[#484850]">
          <Toolbar />
          <BookmarksBar />
        </div>
      </div>
      <Page />
      <Taskbar />
    </div>
  );
}
